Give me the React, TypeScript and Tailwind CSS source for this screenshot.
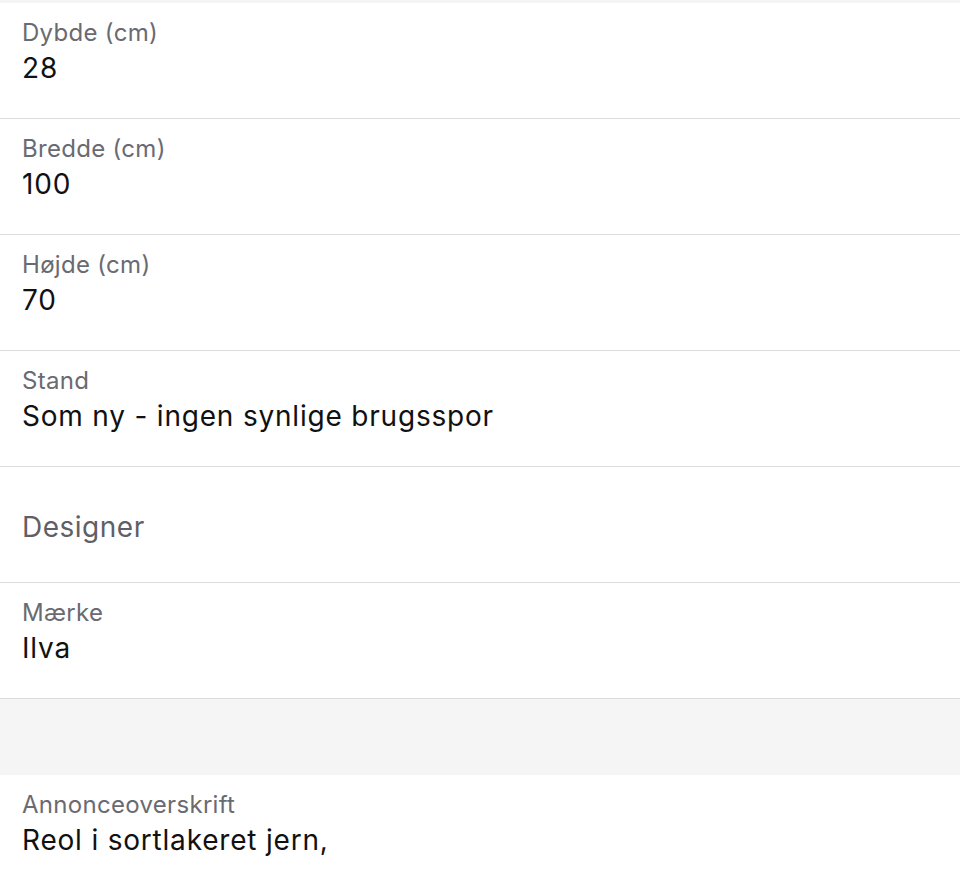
import React from 'react';

type Field = { label: string; value?: string };

const fields: Field[] = [
  { label: 'Dybde (cm)', value: '28' },
  { label: 'Bredde (cm)', value: '100' },
  { label: 'Højde (cm)', value: '70' },
  { label: 'Stand', value: 'Som ny - ingen synlige brugsspor' },
  { label: 'Designer' },
  { label: 'Mærke', value: 'Ilva' },
];

const FieldRow: React.FC<{ field: Field; last?: boolean }> = ({ field, last }) => {
  // tom værdi: label vises som placeholder midt i rækken
  if (!field.value) {
    return (
      <div className="h-[116px] flex items-center px-[22px] pt-[4px] border-b border-[#dcdcdf]">
        <span className="text-[28px] tracking-[0.5px] text-[#5f5f66]">{field.label}</span>
      </div>
    );
  }
  return (
    <div className={`h-[116px] px-[22px] pt-[14px] ${last ? '' : 'border-b border-[#dcdcdf]'}`}>
      <div className="text-[24px] leading-[32px] tracking-[0.3px] text-[#6a6a71]">{field.label}</div>
      <div className="text-[28px] leading-[38px] tracking-[0.8px] text-[#111111]">{field.value}</div>
    </div>
  );
};

export default function App() {
  return (
    <div className="w-[960px] h-[873px] bg-white overflow-hidden" style={{ fontFamily: 'Inter, "Noto Sans", sans-serif' }}>
      <div className="h-[3px] bg-[#f4f4f5]" />
      {fields.map((f) => (
        <FieldRow key={f.label} field={f} />
      ))}
      <div className="h-[76px] bg-[#f5f5f6]" />
      <FieldRow field={{ label: 'Annonceoverskrift', value: 'Reol i sortlakeret jern,' }} last />
    </div>
  );
}
